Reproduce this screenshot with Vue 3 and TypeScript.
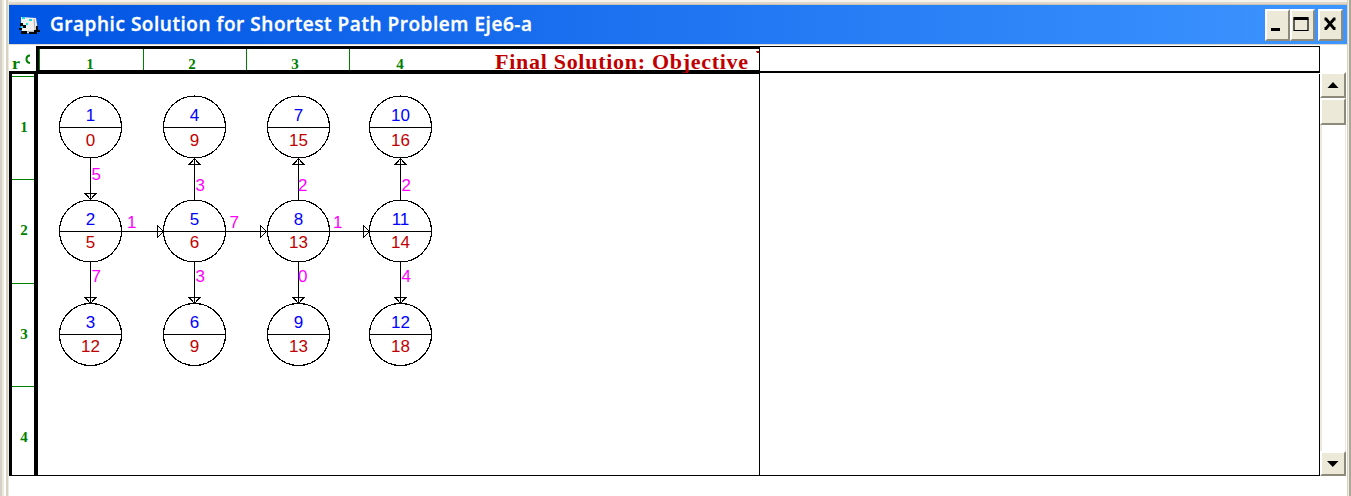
<script setup lang="ts">
interface GraphNode { id: number; cost: number; x: number; y: number; costY: number; circleY: number }
interface Edge { x: number; y: number; dir: 'up' | 'down' | 'right'; weight: number; lx: number; ly: number; head?: number }

const xs = [52.5, 156.5, 260.5, 362.5]
const ys = [53.5, 157.5, 260.5]
const costYs = [72, 174, 278]
const circleYs = [53, 157, 260.5]
const costs = [0, 5, 12, 9, 6, 9, 15, 13, 13, 16, 14, 18]
const nodes: GraphNode[] = costs.map((cost, i) => ({
  id: i + 1, cost, x: xs[Math.floor(i / 3)], y: ys[i % 3], costY: costYs[i % 3], circleY: circleYs[i % 3],
}))

const edges: Edge[] = [
  { x: 52.5, y: 84, dir: 'down', weight: 5, lx: 53.5, ly: 106 },
  { x: 156.5, y: 84, dir: 'up', weight: 3, lx: 157.5, ly: 117 },
  { x: 260.5, y: 84, dir: 'up', weight: 2, lx: 260, ly: 117 },
  { x: 362.5, y: 84, dir: 'up', weight: 2, lx: 363.5, ly: 117 },
  { x: 84, y: 157.5, dir: 'right', weight: 1, lx: 89, ly: 154, head: 35.5 },
  { x: 188, y: 157.5, dir: 'right', weight: 7, lx: 191.5, ly: 154, head: 34.5 },
  { x: 292, y: 157.5, dir: 'right', weight: 1, lx: 295, ly: 154, head: 33.5 },
  { x: 52.5, y: 188, dir: 'down', weight: 7, lx: 53.5, ly: 208 },
  { x: 156.5, y: 188, dir: 'down', weight: 3, lx: 157.5, ly: 208 },
  { x: 260.5, y: 188, dir: 'down', weight: 0, lx: 260, ly: 208 },
  { x: 362.5, y: 188, dir: 'down', weight: 4, lx: 363.5, ly: 208 },
]

function edgePath(e: Edge): string {
  const { x, y } = e
  if (e.dir === 'right') return `M${x} ${y}h41M${x + (e.head ?? 35.5)} ${y - 6}v12l6 -6z`
  if (e.dir === 'up') return `M${x} ${y}v42M${x - 5.5} ${y + 6.5}h11l-5.5 -6z`
  return `M${x} ${y}v42M${x - 5.5} ${y + 35.5}h11l-5.5 6z`
}

const columns = [1, 2, 3, 4]
const rows = [1, 2, 3, 4]
</script>

<template>
  <div class="window">
    <header class="titlebar">
      <svg class="app-icon" width="24" height="22" viewBox="0 0 24 22">
        <path d="M3 2l15 1 2 13-15 3-2-6z" fill="#f3f1ee" />
        <path d="M16 4l1 10 2 4M6 17l11-1" fill="none" stroke="#aaa" />
        <path d="M2 8h3v3H2zM5 10h3v3H5zM1 13h3v2H1zM3 16h6v3H3zM16 15h6v2h-6zM18 11h2v4h-2zM11 17h8v2h-8z" fill="#080808" />
        <path d="M4 2h3v2H4zM11 4h3v2h-3zM3 11h2v2H3zM8 8h2v2H8z" fill="#18dce0" />
      </svg>
      <svg class="title" width="486" height="39">
        <text x="0" y="26" textLength="482" lengthAdjust="spacing">Graphic Solution for Shortest Path Problem Eje6-a</text>
      </svg>
      <div class="controls">
        <button class="raised"><svg width="21" height="28"><path d="M4 18.5h9" stroke="#000" stroke-width="3" /></svg></button>
        <button class="raised"><svg width="21" height="28"><path d="M2 8.5h14v11H2z" fill="none" stroke="#000" stroke-width="1.2" /><path d="M1.4 7.5h15.2" stroke="#000" stroke-width="3" /></svg></button>
        <button class="raised close"><svg width="21" height="28"><path d="M4.500 8h1.500l8 9.500h1.500M15.500 8h-1.500l-8 9.500h-1.500" fill="none" stroke="#000" stroke-width="2.8" /></svg></button>
      </div>
    </header>
    <div class="client">
      <div class="sheet">
        <div class="top-row">
          <div class="corner">
            <svg width="27" height="25"><text x="3" y="23" textLength="8" lengthAdjust="spacingAndGlyphs">r</text><path d="M21 9.500q-3.500 0-3.500 3.500t3.500 4" fill="none" stroke="#008000" stroke-width="2" /></svg>
          </div>
          <div class="heading">
            <span v-for="c in columns" :key="c" class="column-label">{{ c }}</span>
            <svg class="result" width="307" height="28">
              <text x="43" y="24" textLength="253" lengthAdjust="spacing">Final Solution: Objective</text>
              <path d="M304 6h3v2h-2z" fill="#c00000" />
            </svg>
          </div>
          <div class="heading-rest"></div>
        </div>
        <div class="main-row">
          <div class="row-labels"><span v-for="r in rows" :key="r">{{ r }}</span></div>
          <div class="canvas">
            <svg class="graph" width="440" height="320" viewBox="0 0 440 320">
              <g v-for="e in edges" :key="`${e.x}-${e.y}`">
                <path class="line" :d="edgePath(e)" />
                <text class="weight" :x="e.lx" :y="e.ly">{{ e.weight }}</text>
              </g>
              <g v-for="n in nodes" :key="n.id">
                <circle class="line" :cx="n.x" :cy="n.circleY" r="31" />
                <path class="line" :d="`M${n.x - 31} ${n.y}h62M${n.x - 31} ${n.y - 3}v6M${n.x + 31} ${n.y - 3}v6`" />
                <text class="id" text-anchor="middle" :x="n.x" :y="n.y - 6.5">{{ n.id }}</text>
                <text class="cost" text-anchor="middle" :x="n.x" :y="n.costY">{{ n.cost }}</text>
              </g>
            </svg>
          </div>
          <div class="canvas-rest"></div>
        </div>
      </div>
      <div class="scrollbar">
        <button class="raised arrow"><svg width="22" height="21"><path d="M5.500 13l5.500-6 5.500 6z" /></svg></button>
        <div class="raised thumb"></div>
        <div class="track"></div>
        <button class="raised arrow down"><svg width="22" height="21"><path d="M5 8h11.500l-5.750 6z" /></svg></button>
      </div>
    </div>
  </div>
</template>

<style>
body { margin: 0; overflow: hidden; }
</style>

<style scoped>
* { box-sizing: border-box; }
.window {
  width: 1351px; height: 496px; padding: 5px 4px 0 9px; overflow: hidden;
  background:
    linear-gradient(90deg, #d5d0c7 0 2px, #ece9d8 2px 4px, #fff 4px 6px, #d8d2c2 6px 8px, #eee9e0 8px 9px) left / 9px 100% no-repeat,
    linear-gradient(90deg, #d8d0c0 0 1px, #f2eee0 1px 2px, #aaa899 2px 4px) right / 4px 100% no-repeat,
    linear-gradient(#f5f3eb 0 2px, #ded7cb 2px 4px, #c8c1b4 4px 5px) top / 100% 5px no-repeat,
    #fff;
}
.titlebar {
  display: flex; height: 40px; align-items: stretch;
  border-bottom: 1px solid #ded9cc;
  background: linear-gradient(90deg, #0054e3, #3d95ff);
}
.app-icon { margin: 10px 0 0 9px; }
.title { margin-left: 8px; }
.title text { font: 600 19px "Open Sans", sans-serif; fill: #fff; stroke: #fff; stroke-width: .35px; }
.controls { display: flex; margin: 4px 4px 0 auto; height: 32px; }
.raised {
  display: block; padding: 0; border: 2px solid; border-color: #fff #8e8a7b #8e8a7b #fff;
  border-radius: 0; background: #ece9d8;
}
.raised svg { display: block; }
.controls .raised { width: 25px; height: 32px; }
.controls .close { margin-left: 3px; }
.client { display: flex; height: 431px; padding-top: 1px; }
.sheet { width: 1311px; }
.top-row { display: flex; height: 28px; }
.corner { width: 27px; border-bottom: 3px solid #000; }
.corner svg { display: block; }
.corner text { font: bold 16px "Liberation Serif", serif; fill: #008000; }
.heading { display: flex; width: 724px; border: solid #000; border-width: 3px 1px 4px 3px; }
.column-label {
  width: 103px; border-left: 1px solid #008000; color: #008000; text-align: center;
  font: bold 15px/30px "Liberation Serif", serif;
}
.column-label:first-child { width: 104px; padding-right: 3px; }
.column-label:nth-child(2), .column-label:nth-child(3) { padding-right: 6px; }
.column-label:nth-child(4) { padding-right: 2px; }
.result { margin-top: -4px; }
.result text { font: bold 22px "Liberation Serif", serif; fill: #c00000; }
.heading-rest { flex: 1; height: 27px; border: solid #000; border-width: 1px 1px 2px 0; }
.main-row { display: flex; height: 402px; border-bottom: 1px solid #000; }
.row-labels { width: 29px; border: solid #000; border-width: 0 4px 0 3px; padding-top: 2px; overflow: hidden; }
.row-labels span {
  display: block; height: 103.33px; border-top: 1px solid #008000; padding-left: 2px; text-align: center;
  font: bold 15px/101px "Liberation Serif", serif; color: #008000;
}
.canvas { width: 722px; border-right: 1px solid #000; }
.graph { display: block; }
.line { fill: none; stroke: #000; stroke-width: 1.15; shape-rendering: crispEdges; }
.graph text { font: 17px "Liberation Sans", sans-serif; }
.graph .weight { fill: #f0f; }
.graph .id { fill: #00f; }
.graph .cost { fill: #c00000; }
.canvas-rest { flex: 1; border-right: 1px solid #000; }
.scrollbar { width: 27px; display: flex; flex-direction: column; padding-top: 26px; }
.scrollbar .arrow { width: 26px; height: 26px; }
.thumb { width: 26px; height: 27px; }
.track { flex: 1; width: 26px; border: solid #eee9df; border-width: 0 1px 0 2px; background: #fff; }
.scrollbar .down { height: 25px; }
</style>
